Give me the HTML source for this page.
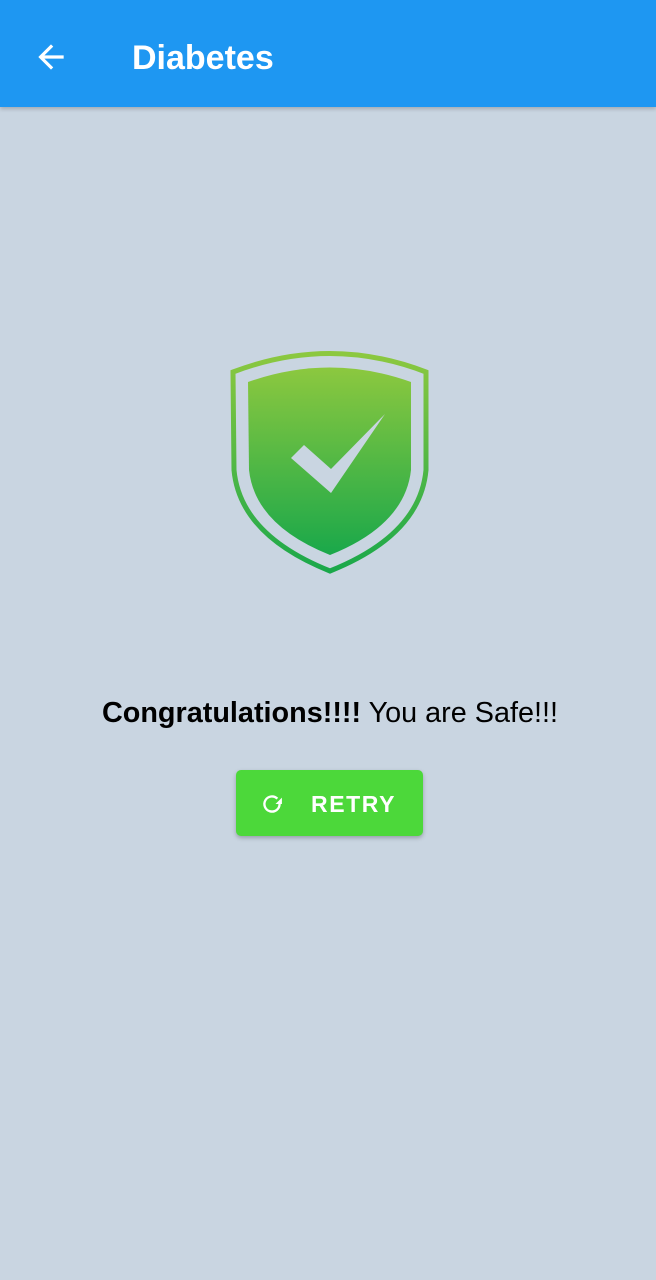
<!DOCTYPE html>
<html><head><style>
body{margin:0;width:656px;height:1280px;background:#c9d5e1;font-family:"Liberation Sans",Roboto,sans-serif;position:relative;overflow:hidden}
.bar{position:absolute;left:0;top:0;width:656px;height:107px;background:#1e97f2;box-shadow:0 2px 4px rgba(0,0,0,.2)}
.title{position:absolute;left:132px;top:39px;color:#fff;font-size:34px;font-weight:bold}
.msg{position:absolute;left:0;width:656px;top:697px;text-align:center;font-size:28.8px;color:#000;padding-left:4px;box-sizing:border-box}
.btn{position:absolute;left:236px;top:770px;width:187px;height:66px;background:#4cd83a;border-radius:5px;box-shadow:0 2px 4px rgba(0,0,0,.25);color:#fff}
.btn span{position:absolute;left:75px;top:21px;font-size:23px;font-weight:bold;letter-spacing:1.6px}
</style></head><body>
<div class="bar">
<svg style="position:absolute;left:32px;top:38px" width="38" height="38" viewBox="0 0 24 24"><path d="M20 11H7.83l5.59-5.59L12 4l-8 8 8 8 1.41-1.41L7.83 13H20v-2z" fill="#fff"/></svg>
<div class="title">Diabetes</div>
</div>
<svg style="position:absolute;left:0;top:0" width="656" height="700">
<defs><linearGradient id="g" x1="0" y1="0" x2="0" y2="1"><stop offset="0" stop-color="#8cc83f"/><stop offset="1" stop-color="#1aa84a"/></linearGradient></defs>
<path d="M233 372 Q330 335 426 372 L426 470 Q420 535 330 571 Q240 535 234 470 Z" fill="none" stroke="url(#g)" stroke-width="5"/>
<path d="M248 382 Q330 353 411 382 L411 470 Q405 525 330 555 Q255 525 249 470 Z" fill="url(#g)"/>
<path d="M291 458 L304 445 L331 469 L385 414 L331 493 Z" fill="#c9d5e1"/>
</svg>
<div class="msg"><b>Congratulations!!!!</b> You are Safe!!!</div>
<div class="btn">
<svg style="position:absolute;left:22px;top:20px" width="28" height="28" viewBox="0 0 24 24"><path d="M18.5 12a6.5 6.5 0 1 1-1.9-4.6" fill="none" stroke="#fff" stroke-width="2"/><path d="M20.5 6.5v5.5h-5.5z" fill="#fff"/></svg>
<span>RETRY</span>
</div>
</body></html>
